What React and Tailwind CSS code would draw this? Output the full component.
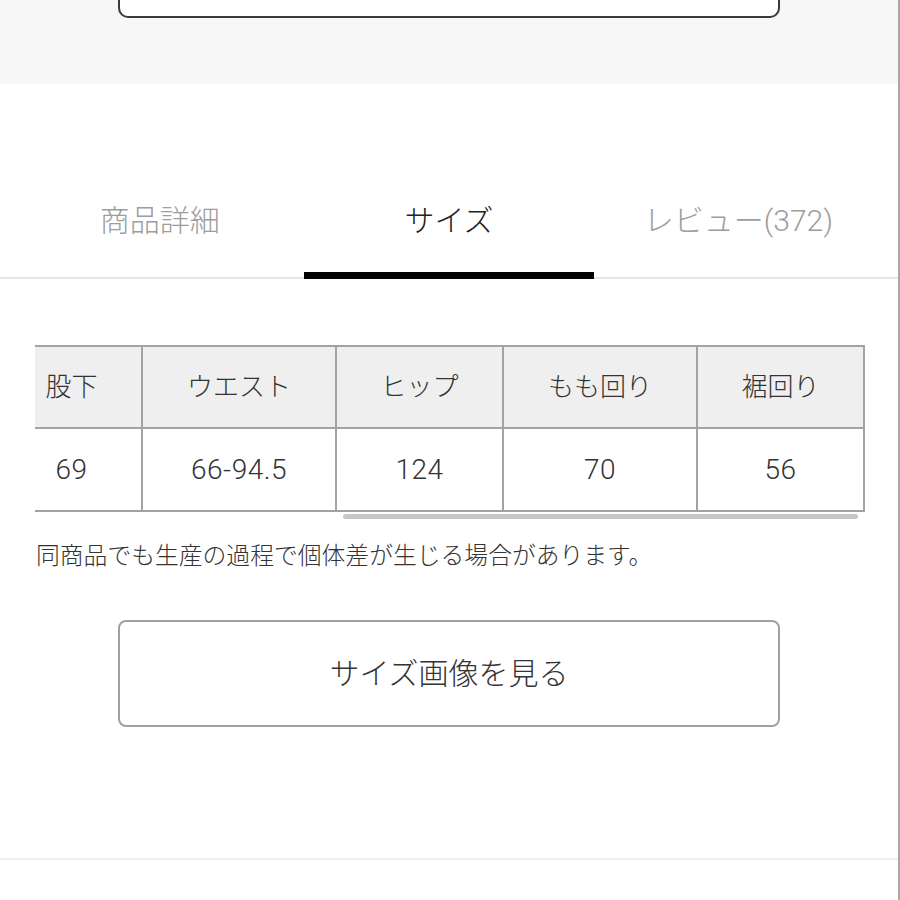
// Product page: size tab with measurement table.

const FONT = { fontFamily: 'Roboto, "Noto Sans CJK JP", sans-serif' };

const tabs = [
  { label: "商品詳細", active: false },
  { label: "サイズ", active: true },
  { label: "レビュー(372)", active: false },
];

const columns = [
  { head: "股下", value: "69" },
  { head: "ウエスト", value: "66-94.5" },
  { head: "ヒップ", value: "124" },
  { head: "もも回り", value: "70" },
  { head: "裾回り", value: "56" },
];

function Tabs() {
  return (
    <div className="flex border-b-2 border-[#e6e6e6] px-[15px] pt-[122px]">
      {tabs.map((tab) => (
        <div key={tab.label} className="flex flex-1 flex-col items-center">
          <span className={`text-[30px] leading-[30px] ${tab.active ? "text-[#222]" : "text-[#9d9d9d]"}`}>{tab.label}</span>
          <div className={`mt-[36px] -mb-[2px] h-[7px] w-full ${tab.active ? "bg-black" : "bg-transparent"}`} />
        </div>
      ))}
    </div>
  );
}

function SizeTable() {
  return (
    <div className="ml-[35px] mt-[66px] w-[830px]">
      <div className="overflow-hidden">
        <div className="-ml-[33px] grid w-[863px] grid-cols-[141px_194px_167px_194px_167px] text-[#333]">
          {columns.map((c) => (
            <div key={c.head} className="flex h-[84px] items-center justify-center border-y-2 border-r-2 border-[#a3a3a3] bg-[#efefef] text-[26px]">
              {c.head}
            </div>
          ))}
          {columns.map((c) => (
            <div key={c.head + "v"} className="flex h-[83px] items-center justify-center border-b-2 border-r-2 border-[#a3a3a3] text-[28px] tracking-[0.5px]">
              {c.value}
            </div>
          ))}
        </div>
      </div>
      <div className="ml-[308px] mt-[2px] h-[5px] w-[515px] rounded-full bg-[#c6c6c6]" />
    </div>
  );
}

export default function App() {
  return (
    <div className="h-[900px] w-[900px] overflow-hidden border-r-2 border-[#a8a8a8] bg-white font-light" style={FONT}>
      <div className="h-[84px] bg-[#f7f7f7]">
        <div className="mx-auto h-[18px] w-[662px] rounded-b-[10px] border-2 border-t-0 border-[#3a3a3a] bg-white" />
      </div>
      <Tabs />
      <SizeTable />
      <p className="ml-[36px] mt-[20px] text-[23.8px] leading-[34px] text-[#333]">同商品でも生産の過程で個体差が生じる場合があります。</p>
      <button className="mx-auto mt-[47px] flex h-[107px] w-[662px] items-center justify-center rounded-[8px] border-2 border-[#a0a0a0] bg-white text-[30px] text-[#333]">
        サイズ画像を見る
      </button>
      <div className="mt-[131px] h-[2px] bg-[#eeeeee]" />
    </div>
  );
}
